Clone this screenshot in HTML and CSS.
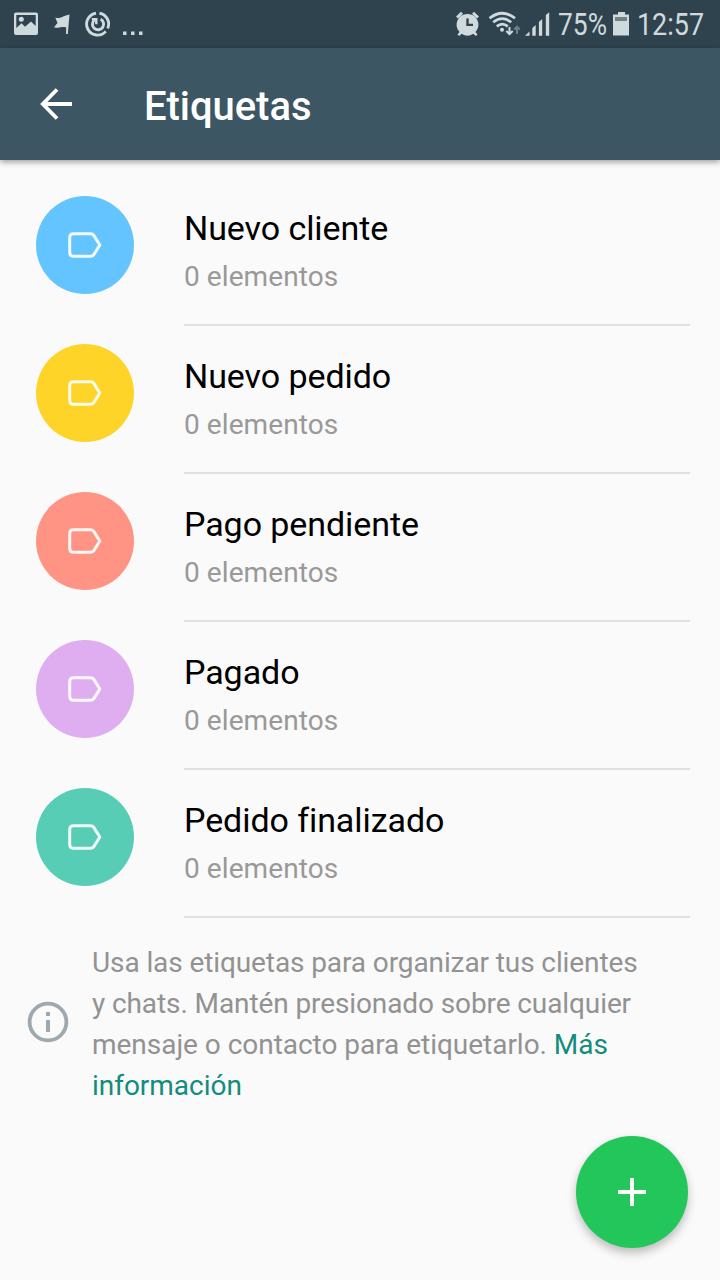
FILE: index.html
```html
<!DOCTYPE html>
<html lang="es">
<head>
<meta charset="utf-8">
<title>Etiquetas</title>
<link rel="stylesheet" href="styles.css">
</head>
<body>
<svg class="defs" width="0" height="0">
  <symbol id="label" viewBox="0 0 36 28"><path d="M6.5 2.7H23.5Q25.6 2.7 26.8 4.4L32.8 14L26.8 23.6Q25.6 25.3 23.5 25.3H6.5Q2.7 25.3 2.7 21.5V6.5Q2.7 2.7 6.5 2.7Z" fill="none" stroke="#fff" stroke-opacity=".92" stroke-width="3" stroke-linejoin="round"/></symbol>
</svg>
<div class="screen">
  <div class="status">
    <svg class="status-left" width="150" height="48" viewBox="0 0 150 48">
      <path fill-rule="evenodd" d="M16 12.5H36Q38 12.5 38 14.5V33Q38 35 36 35H16Q14 35 14 33V14.5Q14 12.5 16 12.5ZM16.3 15V28L21.5 23.3L25 26.8L31 21.5L35.7 26V15Z"/>
      <circle cx="21.3" cy="19.3" r="2.5"/>
      <path d="M69.5 14.5L67.8 34H66L66.2 27.6C62 26 60 28.8 54 27.2L57.5 23L55.3 17.5C60.5 19.5 63 15.5 69.5 14.5Z"/>
      <g fill="none" stroke="#cfdadd" stroke-width="2.9">
        <path d="M96 13.2A11 11 0 1 0 105.8 31.4"/>
        <path d="M107.7 28.4A11 11 0 0 0 99.5 13.2"/>
        <path d="M100.6 19.2A5.6 5.6 0 1 1 94.3 20"/>
        <path d="M91.8 19.2H96.3V24.3" stroke-width="2.4"/>
      </g>
      <rect x="123" y="31.5" width="3.5" height="3.5"/><rect x="131" y="31.5" width="3.5" height="3.5"/><rect x="139" y="31.5" width="3.5" height="3.5"/>
    </svg>
    <svg class="status-right" width="270" height="48" viewBox="450 0 270 48">
      <path fill-rule="evenodd" d="M467.5 14A10.7 10.7 0 0 1 475.5 32L477.5 34.6L475.8 36L473.3 33.8A10.7 10.7 0 0 1 461.7 33.8L459.2 36L457.5 34.6L459.5 32A10.7 10.7 0 0 1 467.5 14ZM466.3 18.5V26H473V23.7H468.7V18.5Z"/>
      <path d="M457 17.5L462 12.8M478 17.5L473 12.8" stroke="#cfdadd" stroke-width="2.8"/>
      <g fill="none" stroke="#cfdadd" stroke-width="2.7">
        <path d="M489.5 18.3Q502.3 8.2 515 18.3"/><path d="M493.2 22.3Q502.3 15 511.2 22.3"/><path d="M496.8 26.4Q502.3 21.8 507.8 26.4"/>
        <path d="M509.5 27V34M506.3 31L509.5 34.2L512.7 31" stroke-width="2"/>
        <path d="M517 34V27M514.2 29.5L517 26.7L519.8 29.5" stroke="#6d8189" stroke-width="2"/>
      </g>
      <circle cx="502" cy="29.7" r="2"/>
      <path d="M525 35.7L529.5 31.5V35.7ZM532.3 28L535.7 25V35.7H532.3ZM538.9 22L542.2 19V35.7H538.9ZM545.8 15L549.2 12.3V35.7H545.8Z"/>
      <path d="M618 12H625V14.5H629V35.5H613V14.5H618Z"/>
      <path d="M615 17H627V21H615Z" fill="#718188"/>
      <text x="558" y="35" textLength="49" lengthAdjust="spacingAndGlyphs">75%</text>
      <text x="637" y="35" textLength="67" lengthAdjust="spacingAndGlyphs">12:57</text>
    </svg>
  </div>
  <header class="appbar">
    <svg class="back" width="34" height="34" viewBox="0 0 34 34"><path d="M33 17H4M18 2.5L3.8 17L18 31.5" fill="none" stroke="#fff" stroke-width="3.8"/></svg>
    <h1>Etiquetas</h1>
  </header>
  <main>
    <ul class="labels">
      <li><span class="dot blue"><svg><use href="#label"/></svg></span><div class="info"><h2>Nuevo cliente</h2><p>0 elementos</p></div></li>
      <li><span class="dot yellow"><svg><use href="#label"/></svg></span><div class="info"><h2>Nuevo pedido</h2><p>0 elementos</p></div></li>
      <li><span class="dot coral"><svg><use href="#label"/></svg></span><div class="info"><h2>Pago pendiente</h2><p>0 elementos</p></div></li>
      <li><span class="dot lilac"><svg><use href="#label"/></svg></span><div class="info"><h2>Pagado</h2><p>0 elementos</p></div></li>
      <li><span class="dot teal"><svg><use href="#label"/></svg></span><div class="info"><h2>Pedido finalizado</h2><p>0 elementos</p></div></li>
    </ul>
    <div class="hint">
      <svg width="42" height="42" viewBox="0 0 42 42"><circle cx="21" cy="21" r="18.4" fill="none" stroke="#9ea9af" stroke-width="3.8"/><path d="M19 11H23V15H19ZM19 19H23V31H19Z" fill="#9ea9af"/></svg>
      <p><span>Usa las etiquetas para organizar tus clientes<br>y chats. Mantén presionado sobre cualquier</span><br>mensaje o contacto para etiquetarlo. <a>Más<br>información</a></p>
    </div>
  </main>
  <button class="fab" aria-label="Añadir"><svg width="28" height="28" viewBox="0 0 28 28"><path d="M14 0V28M0 14H28" stroke="#fff" stroke-width="4"/></svg></button>
</div>
</body>
</html>
```
FILE: styles.css
```css
* { box-sizing: border-box; }
body, h1, h2, p, ul { margin: 0; padding: 0; }
body { font-family: Roboto, sans-serif; background: #fafafa; }
svg { display: block; flex: none; }
.defs { position: absolute; }
.screen { position: relative; width: 720px; height: 1280px; overflow: hidden; background: #fafafa; }
.status { height: 48px; display: flex; justify-content: space-between; background: #2f434f; fill: #cfdadd; }
.status text { font-size: 30.5px; }
.appbar { height: 112px; display: flex; align-items: center; padding-left: 39px; background: #3c5664; box-shadow: 0 2px 6px rgba(0, 0, 0, .38); }
.appbar h1 { margin-left: 71px; padding-top: 6px; font-size: 40px; line-height: 48px; font-weight: 500; color: #fff; letter-spacing: -.05px; }
main { padding-top: 18px; }
.labels { list-style: none; }
.labels li { height: 148px; display: flex; padding: 0 30px 0 36px; }
.dot { width: 98px; height: 98px; margin: 18px 50px 0 0; border-radius: 50%; display: flex; align-items: center; justify-content: center; flex: none; }
.dot svg { width: 36px; height: 28px; }
.blue { background: #64c4ff; }
.yellow { background: #ffd429; }
.coral { background: #ff9485; }
.lilac { background: #dfaef0; }
.teal { background: #57cdb5; }
.info { flex: 1; padding-top: 30px; border-bottom: 2px solid #e0e0e0; }
.info h2 { font-size: 34px; line-height: 40px; font-weight: 400; color: #000; letter-spacing: -.07px; }
.info p { margin-top: 9px; font-size: 28px; line-height: 40px; color: #999; letter-spacing: .08px; }
.hint { display: flex; align-items: center; gap: 23px; padding: 24px 0 0 27px; }
.hint svg { margin-bottom: 4px; }
.hint p { font-size: 28px; line-height: 41px; color: #929292; white-space: nowrap; letter-spacing: -.03px; }
.hint span { letter-spacing: -.1px; }
.hint a { color: #128c7e; }
.fab { position: absolute; right: 32px; bottom: 32px; width: 112px; height: 112px; padding: 0; border: 0; border-radius: 50%; background: #22c65b; display: flex; align-items: center; justify-content: center; box-shadow: 0 5px 10px rgba(0, 0, 0, .25); }
```
